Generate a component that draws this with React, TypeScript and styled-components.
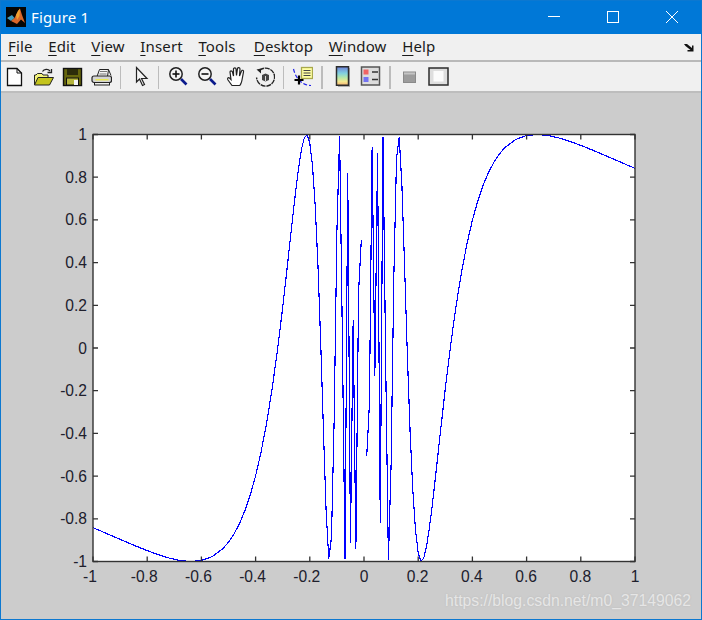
import * as React from 'react';
import styled, {createGlobalStyle} from 'styled-components';

const GlobalStyle = createGlobalStyle`
    html, body {
        margin: 0;
        padding: 0;
        background: #cccccc;
    }
`;

const FigureWindow = styled.div`
    box-sizing: border-box;
    width: 702px;
    height: 620px;
    display: flex;
    flex-direction: column;
    border: 1px solid #0c78d0;
    overflow: hidden;
`;

const TitleBar = styled.div`
    height: 33px;
    flex: none;
    display: flex;
    align-items: center;
    padding: 0 0 1px 5px;
    box-sizing: border-box;
    background: #0078d7;
`;

const TitleText = styled.span`
    margin-left: 5px;
    color: #ffffff;
    font: 15px 'Noto Sans', sans-serif;
    letter-spacing: 0.15px;
`;

const WindowButtons = styled.div`
    margin-left: auto;
    display: flex;
    gap: 1px;
`;

const WindowButton = styled.div`
    width: 58px;
    height: 12px;
    display: flex;
    justify-content: center;
`;

const MenuBar = styled.div`
    height: 28px;
    flex: none;
    box-sizing: border-box;
    display: flex;
    align-items: center;
    gap: 15.6px;
    padding: 0 7px 3px 7px;
    background: #f0f0f0;
    border-bottom: 2px solid #b9b9b9;
`;

const MenuItem = styled.span<{$extra?: number}>`
    margin-left: ${({$extra}) => $extra ?? 0}px;
    color: #1a1a1a;
    font: 15px 'Noto Sans', sans-serif;
    letter-spacing: 0.15px;
    & > u {
        text-underline-offset: 3px;
    }
`;

const DockArrow = styled.svg`
    margin-left: auto;
    margin-top: 3px;
`;

const Toolbar = styled.div`
    height: 31px;
    flex: none;
    box-sizing: border-box;
    display: flex;
    align-items: flex-start;
    padding-top: 4px;
    background: #f0f0f0;
    border-bottom: 2px solid #bdbdbd;
`;

const ToolButton = styled.div<{$first?: boolean}>`
    width: ${({$first}) => ($first ? 28 : 29)}px;
    height: 21px;
    flex: none;
    display: flex;
    justify-content: center;
`;

const ToolSeparator = styled.div<{$wide?: boolean}>`
    width: ${({$wide}) => ($wide ? 10 : 9)}px;
    height: 23px;
    flex: none;
    display: flex;
    justify-content: center;
    &::before {
        content: '';
        width: 1.5px;
        background: #bcbcbc;
    }
`;

const Canvas = styled.div`
    position: relative;
    flex: 1;
    background: #cccccc;
`;

const PlotSvg = styled.svg`
    display: block;
`;

const CurveLine = styled.path`
    fill: none;
    stroke: #0000ff;
    stroke-width: 1.15;
    shape-rendering: crispEdges;
    filter: blur(0.4px);
`;

const TickLabel = styled.text`
    font: 15.6px 'Liberation Sans', Arial, sans-serif;
    fill: #20202c;
`;

const Watermark = styled.span`
    position: absolute;
    left: 444px;
    top: 499px;
    color: #e6e6e6;
    font: 15.75px 'Liberation Sans', Arial, sans-serif;
    text-shadow: 0 0 2px #b8b8b8;
    white-space: nowrap;
`;

const Icon = ({children}: {children: React.ReactNode}) => (
    <svg width={21} height={21} viewBox="0 0 21 21">
        {children}
    </svg>
);

const NewIcon = () => (
    <Icon>
        <path d="M2.5 2.5H12L16.5 7V19.5H2.5Z" fill="#fff" stroke="#111" strokeWidth="1.3" />
        <path d="M12 2.5V7H16.5" fill="none" stroke="#111" />
    </Icon>
);

const OpenIcon = () => (
    <Icon>
        <path d="M1.5 19V9H3L4.5 7.5H9L10 9H15V12" fill="#f4f47c" stroke="#222" />
        <path d="M1.5 19L5 11.5H20.5L16.5 19Z" fill="#c4c41c" stroke="#222" />
        <path d="M9.5 5.5C11 3 15 2.5 17 5" fill="none" stroke="#222" strokeWidth="1.3" />
        <path d="M14.5 6.5H18.5V3" fill="none" stroke="#222" strokeWidth="1.3" />
    </Icon>
);

const SaveIcon = () => (
    <Icon>
        <rect x="1.5" y="2.5" width="18" height="17" fill="#66660c" stroke="#111" strokeWidth="1.4" />
        <rect x="5" y="3" width="11" height="6" fill="#2c2c0a" />
        <rect x="4.5" y="12" width="12" height="7" fill="#b4b43c" stroke="#111" />
        <rect x="12" y="14" width="4" height="5" fill="#f4f4f4" />
    </Icon>
);

const PrintIcon = () => (
    <Icon>
        <path d="M6 10.5L8.5 3.5H17.5L16.5 10.5Z" fill="#f4f4f4" stroke="#222" />
        <path d="M9 5.5H16M8.5 8H15.5" stroke="#777" />
        <path d="M17.5 3.5L20 9.5" stroke="#222" />
        <rect x="1" y="10" width="19.5" height="6.5" rx="2" fill="#d4d4d4" stroke="#222" strokeWidth="1.2" />
        <rect x="4.5" y="13" width="13" height="1.5" fill="#e8e850" />
        <rect x="3.5" y="16.5" width="15" height="2.5" fill="#f0f0f0" stroke="#222" />
    </Icon>
);

const PointerIcon = () => (
    <Icon>
        <path
            d="M7.5 1.5V16L10.5 13L13.5 19.5L15.5 18.5L12.5 12.5H18Z"
            fill="#f4f4f4"
            stroke="#222"
            strokeWidth="1.2"
        />
    </Icon>
);

const Magnifier = ({plus}: {plus?: boolean}) => (
    <Icon>
        <path d="M14 13L19.5 18.5" stroke="#0b1a8c" strokeWidth="2.6" />
        <circle cx="9" cy="8" r="6.2" fill="#f4f4f4" stroke="#222" strokeWidth="1.5" />
        <path d="M5.5 8H12.5" stroke="#111" strokeWidth="1.6" />
        {plus && <path d="M9 4.5V11.5" stroke="#111" strokeWidth="1.6" />}
    </Icon>
);

const HandIcon = () => (
    <Icon>
        <path
            d="M7 19.5L3 14C2 12.5 3 11 4.5 12L6 13.5L5 6C5 4.5 7 4.5 7.5 6L8.5 10L8.5 3C8.5 1.5 11 1.5 11 3L11.5 9.5L12.5 2.5C13 1 15 1.5 15 3L14.5 10L16.5 5C17 3.5 19 4.5 18.5 6L17 14C16.5 17 15 19.5 14.5 19.5Z"
            fill="#fff"
            stroke="#222"
            strokeWidth="1.2"
        />
    </Icon>
);

const RotateIcon = () => (
    <Icon>
        <path
            d="M5.5 4.5A9 9 0 1 1 2.6 11.5"
            fill="none"
            stroke="#222"
            strokeWidth="1.4"
            strokeDasharray="5 0.8"
        />
        <path d="M2.5 3.5L7 2.5V7.5Z" fill="#222" />
        <path d="M8 9L11.5 7.5L15 9V14L11.5 15.5L8 14Z" fill="#444" />
        <path d="M11.5 10V15" stroke="#d8d8d8" />
    </Icon>
);

const DataCursorIcon = () => (
    <Icon>
        <rect x="9.5" y="1.5" width="11" height="11" fill="#ffffa4" stroke="#a8a84c" strokeWidth="1.3" />
        <path d="M11.5 4.5H18.5M11.5 7H18.5M11.5 9.5H18.5" stroke="#444" />
        <path d="M1.5 3C2.5 7 4 11 8 15C11 18 15 19.5 19 19.5" fill="none" stroke="#2222e8" strokeWidth="1.2" strokeDasharray="4 2" />
        <path d="M7 9.5V18.5M2.5 14H11.5" stroke="#000" strokeWidth="2.2" />
    </Icon>
);

const ColorbarIcon = () => (
    <Icon>
        <defs>
            <linearGradient id="cbar" x1="0" y1="0" x2="0" y2="1">
                <stop offset="0" stopColor="#6f7fd8" />
                <stop offset="0.35" stopColor="#80d0e0" />
                <stop offset="0.6" stopColor="#b8e8a8" />
                <stop offset="0.8" stopColor="#f4e890" />
                <stop offset="1" stopColor="#f4b070" />
            </linearGradient>
        </defs>
        <rect x="7" y="2" width="12" height="19" fill="#b0b0b0" />
        <rect x="5.5" y="0.75" width="12" height="18.5" fill="url(#cbar)" stroke="#2c2c2c" strokeWidth="1.5" />
    </Icon>
);

const LegendIcon = () => (
    <Icon>
        <rect x="1.5" y="1" width="18" height="18" fill="#dcdcdc" stroke="#555" strokeWidth="1.5" />
        <rect x="3.5" y="3.5" width="5" height="5" fill="#f06464" />
        <rect x="3.5" y="11" width="5" height="5" fill="#7272f2" />
        <path d="M12 6H18M12 13.5H18" stroke="#333" strokeWidth="1.3" />
    </Icon>
);

const HideIcon = () => (
    <Icon>
        <rect x="4.5" y="6" width="12" height="10.5" fill="#9c9c9c" stroke="#8a8a8a" />
        <rect x="5" y="6.5" width="11" height="2" fill="#c4c4c4" />
    </Icon>
);

const ShowIcon = () => (
    <Icon>
        <rect x="1" y="2" width="19" height="17" fill="#dedede" stroke="#2c2c2c" strokeWidth="1.5" />
        <rect x="5.5" y="5" width="10" height="10.5" fill="#fbfbfb" />
    </Icon>
);

const MatlabLogo = () => (
    <svg width={20} height={20} viewBox="0 0 20 20">
        <rect width="20" height="20" fill="#050505" />
        <path d="M1 11L6 8L8.5 11L5 14Z" fill="#3f9ec4" />
        <path d="M5 14L8.5 11L10 8L12 4L14 1.5L16 8L19 16L15 12.5L11 17Z" fill="#d9662a" />
        <path d="M10 8L12 4L14 1.5L13.5 9L11 13Z" fill="#f0a030" />
    </svg>
);

const MENU = [
    {label: 'File'},
    {label: 'Edit'},
    {label: 'View'},
    {label: 'Insert'},
    {label: 'Tools'},
    {label: 'Desktop', extra: 2.5},
    {label: 'Window'},
    {label: 'Help'},
];

const LEFT = 93;
const RIGHT = 635;
const TOP = 134.5;
const BOTTOM = 561.5;
const TICKS = [-1, -0.8, -0.6, -0.4, -0.2, 0, 0.2, 0.4, 0.6, 0.8, 1];

const sx = (x: number) => (LEFT + RIGHT) / 2 + (x * (RIGHT - LEFT)) / 2;
const sy = (y: number) => (TOP + BOTTOM) / 2 - (y * (BOTTOM - TOP)) / 2;

// sampling gets coarser away from zero: the curve is polygonal out there
const isSample = (i: number) => {
    const a = Math.abs(i);
    if (a >= 52) return a % 4 === 0;
    if (a >= 26) return a % 2 === 0;
    return a !== 0;
};

// y = sin(1/x), x = 0 is NaN so the line breaks there
const buildCurve = () => {
    let d = '';
    for (let i = -100; i <= 100; i++) {
        if (!isSample(i)) continue;
        const x = i / 100;
        const cmd = i === -100 || i === 1 ? 'M' : 'L';
        d += `${cmd}${sx(x).toFixed(2)} ${sy(Math.sin(1 / x)).toFixed(2)}`;
    }
    return d;
};

// negative labels sit a bit left of their tick, the minus sign pulls them over
const labelX = (t: number) => sx(t) + (t < 0 ? -3 : t === 1 || t === 0 ? 0 : -0.5);

const Plot = () => (
    <PlotSvg width={700} height={526} viewBox="1 93 700 526">
        <rect x={LEFT} y={TOP} width={RIGHT - LEFT} height={BOTTOM - TOP} fill="#ffffff" />
        <CurveLine d={buildCurve()} />
        <rect x={LEFT} y={TOP} width={RIGHT - LEFT} height={BOTTOM - TOP} fill="none" stroke="#333" strokeWidth="1.4" />
        {TICKS.map((t) => (
            <g key={t} stroke="#333" strokeWidth="1.3">
                <path d={`M${sx(t)} ${BOTTOM}v-5M${sx(t)} ${TOP}v5`} />
                <path d={`M${LEFT} ${sy(t)}h5M${RIGHT} ${sy(t)}h-5`} />
            </g>
        ))}
        {TICKS.map((t) => (
            <TickLabel key={`x${t}`} x={labelX(t)} y={581.5} textAnchor="middle">
                {t}
            </TickLabel>
        ))}
        {TICKS.map((t) => (
            <TickLabel key={`y${t}`} x={87} y={sy(t) + 5.5} textAnchor="end">
                {t}
            </TickLabel>
        ))}
    </PlotSvg>
);

const App = () => (
    <FigureWindow>
        <GlobalStyle />
        <TitleBar>
            <MatlabLogo />
            <TitleText>Figure 1</TitleText>
            <WindowButtons>
                <WindowButton>
                    <svg width={12} height={12} viewBox="0 0 12 12">
                        <path d="M0 5.5H12" stroke="#fff" />
                    </svg>
                </WindowButton>
                <WindowButton>
                    <svg width={12} height={12} viewBox="0 0 12 12">
                        <rect x="0.5" y="0.5" width="11" height="11" fill="none" stroke="#fff" />
                    </svg>
                </WindowButton>
                <WindowButton>
                    <svg width={12} height={12} viewBox="0 0 12 12">
                        <path d="M0 0L12 12M12 0L0 12" stroke="#fff" />
                    </svg>
                </WindowButton>
            </WindowButtons>
        </TitleBar>
        <MenuBar>
            {MENU.map((item) => (
                <MenuItem key={item.label} $extra={item.extra}>
                    <u>{item.label[0]}</u>
                    {item.label.slice(1)}
                </MenuItem>
            ))}
            <DockArrow width={10} height={9} viewBox="0 0 10 9">
                <path d="M0 1H3L8 5V2.5H9.5V8.5H3.5V7H6.5L1.5 3Z" fill="#111" />
            </DockArrow>
        </MenuBar>
        <Toolbar>
            <ToolButton $first><NewIcon /></ToolButton>
            <ToolButton><OpenIcon /></ToolButton>
            <ToolButton><SaveIcon /></ToolButton>
            <ToolButton><PrintIcon /></ToolButton>
            <ToolSeparator />
            <ToolButton><PointerIcon /></ToolButton>
            <ToolSeparator />
            <ToolButton><Magnifier plus /></ToolButton>
            <ToolButton><Magnifier /></ToolButton>
            <ToolButton><HandIcon /></ToolButton>
            <ToolButton><RotateIcon /></ToolButton>
            <ToolSeparator />
            <ToolButton><DataCursorIcon /></ToolButton>
            <ToolSeparator $wide />
            <ToolButton><ColorbarIcon /></ToolButton>
            <ToolButton><LegendIcon /></ToolButton>
            <ToolSeparator $wide />
            <ToolButton><HideIcon /></ToolButton>
            <ToolButton><ShowIcon /></ToolButton>
        </Toolbar>
        <Canvas>
            <Plot />
            <Watermark>https://blog.csdn.net/m0_37149062</Watermark>
        </Canvas>
    </FigureWindow>
);

export default App;
